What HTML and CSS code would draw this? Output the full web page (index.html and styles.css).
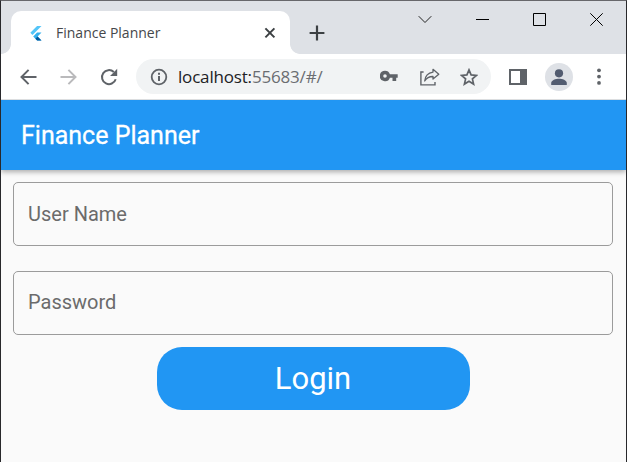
FILE: index.html
```html
<!DOCTYPE html>
<html lang="en">
<head>
<meta charset="utf-8">
<title>Finance Planner</title>
<link rel="stylesheet" href="styles.css">
</head>
<body>
<div class="window">
  <div class="titlebar">
    <div class="tab">
      <svg class="favicon" width="12" height="16" viewBox="0 0 12 16"><path d="M7.6 1H12L3 10 .8 7.8z" fill="#54c5f8"/><path d="M7.6 7.6H12L8.1 11.5 12 15.4H7.6L3.7 11.5z" fill="#35b0ee"/><path d="M5.9 13.7 8.1 11.5 12 15.4H7.6z" fill="#01579b"/></svg>
      <span class="tab-title">Finance Planner</span>
      <svg class="tab-close" width="12" height="12" viewBox="0 0 12 12"><path d="M1.4 1.4l9 9M10.4 1.4l-9 9" stroke="#3c4043" stroke-width="2"/></svg>
    </div>
    <svg class="new-tab" width="16" height="16" viewBox="0 0 16 16"><path d="M8 .6v14.8M.6 8h14.8" stroke="#3c4043" stroke-width="2.2"/></svg>
    <div class="controls">
      <svg width="14" height="14" viewBox="0 0 14 14"><path d="M.7 4.2 7 10.5l6.3-6.3" fill="none" stroke="#222" stroke-width="1"/></svg>
      <svg width="13" height="14" viewBox="0 0 13 14"><path d="M0 7.5h13" stroke="#000"/></svg>
      <svg width="13" height="14" viewBox="0 0 13 14"><path d="M.5 1.5h12v12H.5z" fill="none" stroke="#000"/></svg>
      <svg width="13" height="14" viewBox="0 0 13 14"><path d="M.3 1.3l12.4 12.4M12.7 1.3.3 13.7" stroke="#000"/></svg>
    </div>
  </div>
  <div class="toolbar">
    <svg class="back" width="17" height="16" viewBox="0 0 17 16"><path d="M16.5 8H2M8.6.9 1.5 8l7.1 7.1" fill="none" stroke="#5f6368" stroke-width="2"/></svg>
    <svg class="forward" width="17" height="16" viewBox="0 0 17 16"><path d="M.5 8H15M8.4.9 15.5 8l-7.1 7.1" fill="none" stroke="#bababc" stroke-width="2"/></svg>
    <svg class="reload" width="18" height="18" viewBox="0 0 18 18"><path d="M15.7 11.2A7 7 0 1 1 13.8 4" fill="none" stroke="#5f6368" stroke-width="2"/><path d="M17.2.8v7.1h-7.1z" fill="#5f6368"/></svg>
    <div class="omnibox">
      <svg class="info" width="18" height="18" viewBox="0 0 18 18"><circle cx="9" cy="9" r="7.3" fill="none" stroke="#5f6368" stroke-width="1.8"/><path d="M9 8v5M9 4.8v1.9" stroke="#5f6368" stroke-width="2"/></svg>
      <span class="url">localhost:<span class="path">55683/#/</span></span>
      <svg class="key" width="18" height="12" viewBox="0 0 18 12"><path fill-rule="evenodd" d="M5 .8a5.2 5.2 0 0 1 4.9 3.4h7.8v3.5h-1.5V11h-3.7V7.7H9.9A5.2 5.2 0 1 1 5 .8zm0 3.4a1.8 1.8 0 1 0 0 3.6 1.8 1.8 0 0 0 0-3.6z" fill="#5f6368"/></svg>
      <svg class="share" width="20" height="18" viewBox="0 0 20 18"><path d="M3.6 4H.9v12.9H15v-3" fill="none" stroke="#5f6368" stroke-width="1.4"/><path d="M13 1.3 18.8 6.2 13 11.1V8.5C9.3 8.4 6.7 9.8 4.7 13c.5-4.9 3.2-8.2 8.3-8.9z" fill="none" stroke="#5f6368" stroke-width="1.3" stroke-linejoin="round"/></svg>
      <svg class="star" width="18" height="18" viewBox="0 0 18 18"><path d="M9 1.9l2.1 5 5.3.5-4 3.5 1.2 5.2L9 13.3l-4.6 2.8 1.2-5.2-4-3.5 5.3-.5z" fill="none" stroke="#5f6368" stroke-width="1.7"/></svg>
    </div>
    <svg class="panel" width="18" height="18" viewBox="0 0 18 18"><path fill-rule="evenodd" d="M0 1h18v16H0zM2 3v12h9V3z" fill="#5f6368"/></svg>
    <svg class="avatar" width="28" height="28" viewBox="0 0 28 28"><circle cx="14" cy="14" r="14" fill="#dee1e6"/><circle cx="14" cy="10.3" r="4.1" fill="#525c70"/><path d="M6.2 22v-2c0-2.9 4.6-4.3 7.8-4.3s7.8 1.4 7.8 4.3v2z" fill="#525c70"/></svg>
    <svg class="menu" width="4" height="18" viewBox="0 0 4 18"><g fill="#5f6368"><circle cx="2" cy="2.3" r="1.9"/><circle cx="2" cy="8.6" r="1.9"/><circle cx="2" cy="14.9" r="1.9"/></g></svg>
  </div>
  <header class="appbar"><h1>Finance Planner</h1></header>
  <main class="content">
    <div class="field">User Name</div>
    <div class="field">Password</div>
    <button class="login">Login</button>
  </main>
</div>
</body>
</html>
```
FILE: styles.css
```css
* { box-sizing: border-box; }
body { margin: 0; background: #fff; overflow: hidden; }
svg { display: block; flex: none; }
.window {
  width: 627px; height: 462px;
  display: flex; flex-direction: column;
  border: 1px solid #28282b; border-top-color: #67676b; border-bottom: 0;
  background: #fafafa;
  font-family: Roboto, sans-serif;
}
.titlebar { display: flex; height: 53px; background: #dee1e6; }
.tab {
  position: relative;
  display: flex; align-items: center;
  width: 279px; height: 43px; margin: 10px 0 0 10px; padding-left: 18px;
  border-radius: 10px 10px 0 0; background: #fff;
}
.tab::before, .tab::after {
  content: ""; position: absolute; bottom: 0; width: 10px; height: 10px;
}
.tab::before { left: -10px; background: radial-gradient(circle at 0 0, transparent 9.5px, #fff 10.2px); }
.tab::after { right: -10px; background: radial-gradient(circle at 100% 0, transparent 9.5px, #fff 10.2px); }
.favicon { width: 13px; }
.tab-title {
  width: 208px; margin-left: 14px;
  font: 14px/20px "Open Sans", sans-serif;
  color: #45474a; white-space: nowrap;
}
.new-tab { margin: 24px 0 0 19px; }
.controls { display: flex; gap: 44px; margin: 11px 0 0 93px; }
.toolbar { display: flex; align-items: center; height: 46px; padding-left: 19px; background: #fff; border-bottom: 1px solid #dcdee0; }
.forward { margin-left: 23px; }
.reload { margin-left: 23px; }
.omnibox {
  display: flex; align-items: center;
  width: 355px; height: 35px; margin-left: 18px; padding-left: 14px;
  border-radius: 18px; background: #f1f3f4;
}
.url {
  width: 202px; margin-left: 10px;
  font: 17px/24px "Open Sans", sans-serif; letter-spacing: -0.18px;
  color: #202124; white-space: nowrap;
}
.path { color: #6a6d71; }
.key { margin-top: -2px; }
.share { margin-left: 22px; }
.star { margin-left: 20px; }
.panel { margin-left: 18px; }
.avatar { margin-left: 18px; }
.menu { margin-left: 24px; }
.appbar {
  display: flex; align-items: center; flex: none;
  height: 70px; padding-left: 20px;
  background: #2196f3; box-shadow: 0 2px 5px rgba(0,0,0,.32);
  clip-path: inset(0 0 -12px 0);
}
h1 { margin: 2px 0 0; font-size: 25px; font-weight: 400; line-height: 30px; color: #fff; white-space: nowrap; -webkit-text-stroke: 0.3px #fff; }
.content { display: flex; flex-direction: column; align-items: center; padding-top: 12px; }
.field {
  display: flex; align-items: center;
  width: 600px; height: 64px; margin: 0 1px 25px 0; padding: 0 0 1px 14px;
  border: 1px solid #9b9b9b; border-radius: 5px;
  font-size: 20px; color: #6b6b6b;
}
.field + .field { margin-bottom: 12px; padding-bottom: 2px; }
.login {
  width: 313px; height: 63px; padding: 0 1px 0 0;
  border: 0; border-radius: 25px; background: #2196f3;
  font: 31px/36px Roboto, sans-serif; color: #fff;
}
```
